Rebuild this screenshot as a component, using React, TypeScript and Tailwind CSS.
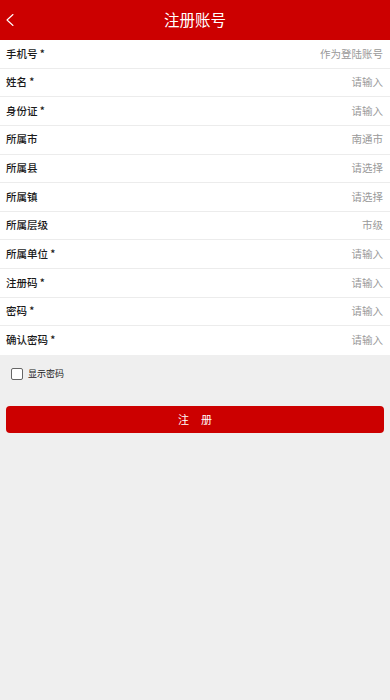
import React from "react";

const rows: [string, string][] = [
  ["手机号 *", "作为登陆账号"],
  ["姓名 *", "请输入"],
  ["身份证 *", "请输入"],
  ["所属市", "南通市"],
  ["所属县", "请选择"],
  ["所属镇", "请选择"],
  ["所属层级", "市级"],
  ["所属单位 *", "请输入"],
  ["注册码 *", "请输入"],
  ["密码 *", "请输入"],
  ["确认密码 *", "请输入"],
];

export default function App() {
  return (
    <div
      className="w-[390px] h-[700px] bg-[#efefef] flex flex-col"
      style={{ fontFamily: '"Noto Sans CJK SC", "Noto Sans", sans-serif' }}
    >
      <div className="h-[40px] bg-[#cc0000] relative flex items-center justify-center shrink-0">
        <svg
          className="absolute left-[5px] top-[13px]"
          width="10"
          height="14"
          viewBox="0 0 10 14"
          fill="none"
        >
          <path d="M8 1.5 L2 7 L8 12.5" stroke="white" strokeWidth="1.1" strokeLinecap="round" strokeLinejoin="round" />
        </svg>
        <span className="text-white text-[15.5px] leading-none">注册账号</span>
      </div>
      <div className="bg-white flex flex-col">
        {rows.map(([label, ph], i) => (
          <div
            key={label}
            className={`h-[28.64px] flex items-center justify-between pl-[6px] pr-[7px] ${
              i < rows.length - 1 ? "border-b border-[#ececec]" : ""
            }`}
          >
            <span className="text-[10.5px] text-[#1a1a1a] font-medium leading-none">{label}</span>
            <span className="text-[10.5px] text-[#999] leading-none">{ph}</span>
          </div>
        ))}
      </div>
      <div className="flex items-center pl-[11px] mt-[13px] h-[12px]">
        <div className="w-[12px] h-[12px] border border-[#666] rounded-[2px] bg-white" />
        <span className="ml-[5px] text-[9px] text-[#222] leading-none">显示密码</span>
      </div>
      <div className="px-[6px] mt-[26px]">
        <div className="h-[27px] rounded-[4px] bg-[#cc0000] flex items-center justify-center gap-[12px] text-white text-[11px] leading-none">
          <span>注</span>
          <span>册</span>
        </div>
      </div>
    </div>
  );
}
